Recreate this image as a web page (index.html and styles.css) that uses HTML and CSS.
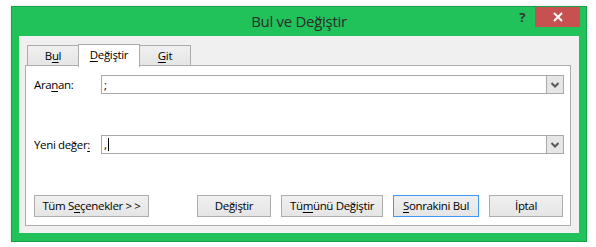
FILE: index.html
```html
<!DOCTYPE html>
<html lang="tr">
<head>
<meta charset="utf-8">
<title>Bul ve Değiştir</title>
<link rel="stylesheet" href="styles.css">
</head>
<body>
<div class="window">
  <div class="titlebar">
    <div class="spacer"></div>
    <div class="title">Bul ve Değiştir</div>
    <div class="controls">
      <span class="help">?</span>
      <span class="close"><svg width="10" height="10" viewBox="0 0 10 10"><path d="M1 1 L9 9 M9 1 L1 9" stroke="#fff" stroke-width="2"/></svg></span>
    </div>
  </div>
  <div class="client">
    <div class="tabs">
      <div class="tab">B<u>u</u>l</div>
      <div class="tab active"><u>D</u>eğiştir</div>
      <div class="tab"><u>G</u>it</div>
    </div>
    <div class="panel">
      <div class="row">
        <label class="lbl">Ara<u>n</u>an:</label>
        <div class="combo">
          <span class="val">;</span>
          <span class="drop"><svg width="8" height="6" viewBox="0 0 8 6"><path d="M0.5 1 L4 4.5 L7.5 1" fill="none" stroke="#5a5a5a" stroke-width="2"/></svg></span>
        </div>
      </div>
      <div class="row row2">
        <label class="lbl">Yeni değer<u>:</u></label>
        <div class="combo">
          <span class="val">,<span class="caret"></span></span>
          <span class="drop"><svg width="8" height="6" viewBox="0 0 8 6"><path d="M0.5 1 L4 4.5 L7.5 1" fill="none" stroke="#5a5a5a" stroke-width="2"/></svg></span>
        </div>
      </div>
      <div class="buttons">
        <button class="btn b-opts">Tüm S<u>e</u>çenekler &gt; &gt;</button>
        <div class="right">
          <button class="btn b-rep">De<u>ğ</u>iştir</button>
          <button class="btn b-all">Tü<u>m</u>ünü Değiştir</button>
          <button class="btn b-next default"><u>S</u>onrakini Bul</button>
          <button class="btn b-cancel">İptal</button>
        </div>
      </div>
    </div>
  </div>
</div>
</body>
</html>
```
FILE: styles.css
```css
* { box-sizing: border-box; }
html, body { margin: 0; padding: 0; background: #ffffff; }
body {
  font-family: "Open Sans", "Noto Sans", sans-serif;
  font-size: 11.5px;
  letter-spacing: -0.35px;
  color: #000;
  padding: 6px 0 0 11px;
}
.window {
  width: 576px;
  height: 236px;
  background: #22c25a;
  border: 1px solid #1b9e49;
  box-shadow: 0 0 4px rgba(0,0,0,0.12);
  padding: 0 7px 8px 7px;
  display: flex;
  flex-direction: column;
}
.titlebar {
  height: 29px;
  display: grid;
  grid-template-columns: 72px 1fr 72px;
  margin: 0 -7px;
}
.title {
  text-align: center;
  font-size: 15px;
  line-height: 29px;
  color: #2b2b2b;
  letter-spacing: -0.3px;
}
.controls {
  display: flex;
  align-items: flex-start;
  justify-content: flex-end;
  padding-right: 6px;
}
.help {
  font-weight: bold;
  font-size: 13px;
  color: #333;
  line-height: 20px;
  margin-right: 10px;
}
.close {
  width: 45px;
  height: 20px;
  background: #c75050;
  display: flex;
  align-items: center;
  justify-content: center;
}
.client {
  flex: 1;
  background: #f0f0f0;
  padding: 8px 8px 7px 6px;
  display: flex;
  flex-direction: column;
}
.tabs {
  display: flex;
  align-items: flex-end;
  padding-left: 2px;
  height: 22px;
  position: relative;
  z-index: 1;
}
.tab {
  height: 20px;
  border: 1px solid #acacac;
  border-bottom: none;
  background: linear-gradient(#f0f0f0, #e5e5e5);
  text-align: center;
  line-height: 19px;
  margin-bottom: 1px;
}
.tab:nth-child(1) { width: 51px; border-right: none; }
.tab:nth-child(3) { width: 51px; border-left: none; }
.tab.active {
  width: 62px;
  height: 23px;
  background: #fff;
  margin-bottom: -1px;
  line-height: 20px;
}
.panel {
  flex: 1;
  background: #fff;
  border: 1px solid #adadad;
  margin-top: -1px;
  padding: 9px 6px 8px 8px;
  display: flex;
  flex-direction: column;
}
.row {
  display: flex;
  align-items: center;
  height: 19px;
}
.row2 { margin-top: 41px; }
.lbl {
  width: 67px;
  color: #000;
}
.combo {
  flex: 1;
  height: 19px;
  border: 1px solid #a9a9a9;
  display: flex;
  background: #fff;
}
.val {
  flex: 1;
  padding-left: 2px;
  line-height: 17px;
  display: flex;
  align-items: center;
}
.caret {
  display: inline-block;
  width: 1px;
  height: 13px;
  background: #000;
  margin-left: 1px;
}
.drop {
  width: 17px;
  height: 17px;
  background: #e6e6e6;
  border-left: 1px solid #a9a9a9;
  display: flex;
  align-items: center;
  justify-content: center;
}
.buttons {
  margin-top: auto;
  display: flex;
  padding-right: 1px;
}
.right {
  margin-left: auto;
  display: flex;
  gap: 10px;
}
.btn {
  font-family: inherit;
  font-size: 11.5px;
  letter-spacing: -0.35px;
  color: #000;
  height: 22px;
  border: 1px solid #adadad;
  background: linear-gradient(#f0f0f0, #e5e5e5);
  padding: 0;
  line-height: 18px;
}
.btn.default { border-color: #3c9af3; }
.b-opts { width: 115px; }
.b-rep { width: 74px; }
.b-all { width: 102px; }
.b-next { width: 86px; }
.b-cancel { width: 74px; }
u { text-underline-offset: 2px; }
```
